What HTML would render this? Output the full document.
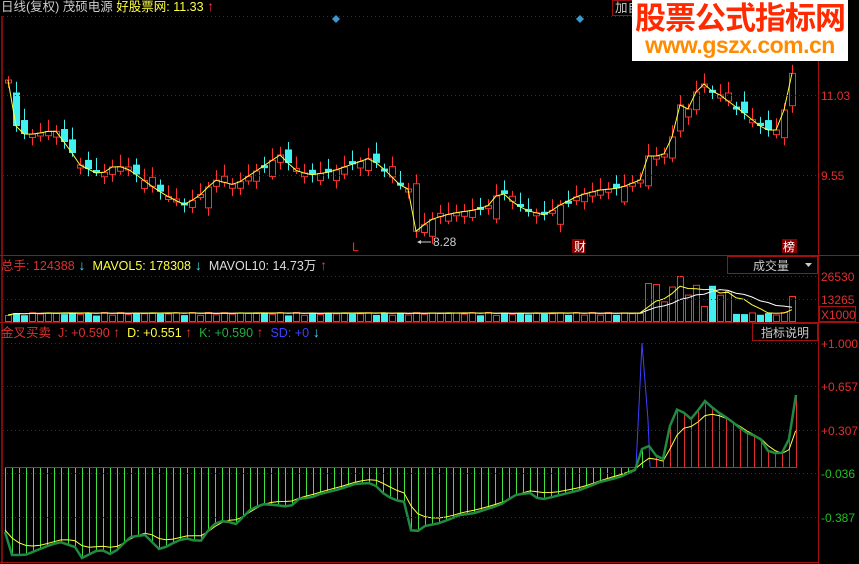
<!DOCTYPE html>
<html><head><meta charset="utf-8"><style>
html,body{margin:0;padding:0;background:#000;width:859px;height:564px;overflow:hidden;font-family:"Liberation Sans","Noto Sans CJK SC",sans-serif;}
#c{position:absolute;left:0;top:0}
.t{position:absolute;font-size:12.5px;white-space:nowrap;line-height:14px}
.ar{font-weight:bold;font-size:14px}
</style></head><body>
<svg id="c" width="859" height="564" xmlns="http://www.w3.org/2000/svg">
<rect width="859" height="564" fill="#000"/>
<g id="g"></g>
<line x1="2" y1="16" x2="2" y2="564" stroke="#a01010" stroke-width="1.5"/>
<line x1="818.5" y1="16" x2="818.5" y2="564" stroke="#a01010"/>
<line x1="0" y1="255.5" x2="859" y2="255.5" stroke="#a01010"/>
<line x1="0" y1="322.5" x2="859" y2="322.5" stroke="#a01010"/>
<line x1="0" y1="562.5" x2="818" y2="562.5" stroke="#a01010"/>
<g stroke="#801010" stroke-dasharray="1,3">
<line x1="3" y1="16.5" x2="818" y2="16.5"/>
<line x1="3" y1="95.5" x2="818" y2="95.5"/>
<line x1="3" y1="175.5" x2="818" y2="175.5"/>
<line x1="3" y1="276.5" x2="818" y2="276.5"/>
<line x1="3" y1="299.5" x2="818" y2="299.5"/>
<line x1="3" y1="343.5" x2="818" y2="343.5"/>
<line x1="3" y1="386.5" x2="818" y2="386.5"/>
<line x1="3" y1="430.5" x2="818" y2="430.5"/>
<line x1="3" y1="473.5" x2="818" y2="473.5"/>
<line x1="3" y1="517.5" x2="818" y2="517.5"/>
</g>
<path d="M336 15 l4 4 -4 4 -4 -4z" fill="#3a9ad0"/>
<path d="M580 15 l4 4 -4 4 -4 -4z" fill="#3a9ad0"/>
<rect x="572" y="239" width="13" height="14" fill="#8a0000"/>
<rect x="782" y="239" width="15" height="14" fill="#8a0000"/>
<text x="574" y="251" fill="#fff" font-size="12" font-family="Noto Sans CJK SC">财</text>
<text x="783" y="251" fill="#fff" font-size="12" font-family="Noto Sans CJK SC">榜</text>
<text x="352" y="251" fill="#ff2020" font-size="12" font-family="Liberation Sans">L</text>
<line x1="420" y1="242" x2="431" y2="242" stroke="#ccc"/><path d="M417 242 l4 -2 v4z" fill="#ccc"/>
<text x="433" y="246" fill="#ccc" font-size="12" font-family="Liberation Sans">8.28</text>
<rect x="727.5" y="256.5" width="90" height="17" fill="none" stroke="#a01010"/>
<text x="753" y="270" fill="#ccc" font-size="12" font-family="Noto Sans CJK SC">成交量</text>
<path d="M805 263 h7 l-3.5 4z" fill="#ccc"/>
<rect x="752.5" y="323.5" width="65" height="17" fill="none" stroke="#a01010"/>
<text x="761" y="337" fill="#ccc" font-size="12" font-family="Noto Sans CJK SC">指标说明</text>
<rect x="819.5" y="306.5" width="36" height="15" fill="none" stroke="#a01010"/>
<g font-family="Liberation Sans" font-size="12" fill="#e03030">
<text x="821" y="100">11.03</text><text x="821" y="180">9.55</text>
<text x="821" y="281">26530</text><text x="821" y="304">13265</text><text x="821" y="319">X1000</text>
<text x="821" y="348">+1.000</text><text x="821" y="391">+0.657</text><text x="821" y="435">+0.307</text>
</g>
<g font-family="Liberation Sans" font-size="12" fill="#20c020">
<text x="821" y="478">-0.036</text><text x="821" y="522">-0.387</text>
</g>
</svg>
<div class="t" style="left:1px;top:-1px;color:#ccc">日线(复权) 茂硕电源 <span style="color:#ffff40">好股票网: 11.33</span> <span class="ar" style="color:#ff3030">↑</span></div>
<div class="t" style="left:612px;top:0;color:#ccc;border:1px solid #a01010;padding:0 2px">加自选</div>
<div style="position:absolute;left:632px;top:0;width:216px;height:61px;background:#fff;overflow:hidden">
<div style="color:#ff2a00;font-size:31px;font-weight:bold;line-height:36px;white-space:nowrap;text-align:center;letter-spacing:-1px;font-family:'Noto Sans CJK SC',sans-serif;margin-top:-2px">股票公式指标网</div>
<div style="color:#ff8c00;font-size:23px;font-weight:bold;line-height:22px;white-space:nowrap;text-align:center;letter-spacing:-0.5px;font-family:'Liberation Sans',sans-serif">www.gszx.com.cn</div></div>
<div class="t" style="left:1px;top:258px;color:#e03030">总手: 124388<span class="ar" style="color:#40e0f0"> ↓</span> <span style="color:#ffff40">&nbsp;MAVOL5: 178308</span><span class="ar" style="color:#40e0f0"> ↓</span> <span style="color:#ddd">&nbsp;MAVOL10: 14.73万</span><span class="ar" style="color:#ff3030"> ↑</span></div>
<div class="t" style="left:1px;top:325px;color:#e03030">金叉买卖 &nbsp;J: +0.590 <span class="ar">↑</span> <span style="color:#ffff40">&nbsp;D: +0.551</span> <span class="ar">↑</span> <span style="color:#20b040">&nbsp;K: +0.590</span> <span class="ar">↑</span> <span style="color:#4040ff">&nbsp;SD: +0</span><span class="ar" style="color:#40e0f0"> ↓</span></div>
<script>
function interp(pts,x){for(let i=1;i<pts.length;i++){if(x<=pts[i][0]){const a=pts[i-1],b=pts[i];return a[1]+(b[1]-a[1])*(x-a[0])/(b[0]-a[0]);}}return pts[pts.length-1][1];}
const P=[[8,80],[15,125],[25,135],[40,133],[55,130],[70,150],[80,165],[100,175],[115,165],[130,170],[150,185],[165,195],[185,205],[200,195],[215,180],[235,185],[250,175],[265,165],[280,155],[295,170],[310,175],[330,172],[350,165],[370,158],[385,170],[400,185],[410,190],[415,232],[430,220],[445,215],[460,212],[475,210],[490,205],[500,190],[510,200],[525,210],[545,215],[560,205],[580,195],[600,190],[620,188],[640,180],[650,150],[660,160],[670,145],[680,105],[690,110],[700,80],[710,90],[720,95],[740,110],[750,118],[765,130],[780,130],[790,80],[796,60]];
const K=[[5,532],[12,555],[25,555],[50,545],[60,542],[75,547],[82,558],[100,549],[112,555],[130,537],[145,535],[160,550],[175,542],[185,538],[200,542],[212,525],[225,520],[235,525],[250,510],[262,504],[275,505],[290,507],[300,498],[310,498],[320,494],[340,489],[355,484],[370,483],[375,485],[385,495],[395,500],[405,502],[412,535],[425,526],[440,523],[460,515],[475,513],[490,508],[500,505],[515,495],[530,493],[540,500],[560,495],[580,490],[600,482],[620,477],[635,470],[645,440],[655,455],[665,460],[672,412],[680,408],[690,420],[700,408],[705,401],[715,410],[730,420],[745,432],[760,438],[770,454],[780,452],[787,455],[792,415],[797,390]];
let s='';let prev=interp(P,8);let pl='';let kl='',dl='';let d=interp(K,5);
const vol=[];
for(let x=8,i=0;x<=797;x+=8,i++){
 const c=interp(P,x);const o=prev+(Math.sin(i*2.3)*6)+(i%4==1?8:0);const up=c<o||i%3==0;
 const top=Math.min(o,c),bot=Math.max(o,c),h=Math.max(bot-top,3);
 const col=up?'#ff3030':'#40f0f0';
 s+=`<line x1="${x+.5}" y1="${top-4-Math.abs(Math.sin(i))*8}" x2="${x+.5}" y2="${bot+3+Math.abs(Math.cos(i))*5}" stroke="${col}"/>`;
 s+=up?`<rect x="${x-2.5}" y="${top}" width="6" height="${h}" fill="#000" stroke="${col}"/>`:`<rect x="${x-3}" y="${top}" width="7" height="${h}" fill="${col}"/>`;
 pl+=(pl?'L':'M')+x+' '+c.toFixed(1);prev=c;
 let vh=6+Math.abs(Math.sin(i*1.7))*3;
 if(x>640&&x<730)vh=15+Math.abs(Math.sin(i*1.3))*22; if(x>=675&&x<=682)vh=45; if(x>=645&&x<=652)vh=38; if(x>785)vh=25;
 vol.push([x,vh]);
 s+=up?`<rect x="${x-2.5}" y="${321.5-vh}" width="6" height="${vh}" fill="none" stroke="#ff3030"/>`:`<rect x="${x-3}" y="${322-vh}" width="7" height="${vh}" fill="#40f0f0"/>`;
}
s+=`<path d="${pl}" fill="none" stroke="#ffff40" stroke-width="1"/>`;
let m5='',m10='';
for(let j=0;j<vol.length;j++){let a=0,n=0,b=0,m=0;for(let k=Math.max(0,j-4);k<=j;k++){a+=vol[k][1];n++;}for(let k=Math.max(0,j-9);k<=j;k++){b+=vol[k][1];m++;}
m5+=(m5?'L':'M')+vol[j][0]+' '+(322-a/n-1).toFixed(1);m10+=(m10?'L':'M')+vol[j][0]+' '+(322-b/m-1).toFixed(1);}
s+=`<path d="${m10}" fill="none" stroke="#fff"/><path d="${m5}" fill="none" stroke="#ffff40"/>`;
for(let x=5;x<=797;x+=7){const k=interp(K,x);
 if(x<645){s+=`<line x1="${x+.5}" y1="468" x2="${x+.5}" y2="${k}" stroke="#40e040"/>`;}
 else if(x>=650){s+=`<line x1="${x+.5}" y1="467" x2="${x+.5}" y2="${k}" stroke="#e03030"/>`;}
 kl+=(kl?'L':'M')+x+' '+k.toFixed(1);d=d*0.6+k*0.4+ (k>467?-2:2);dl+=(dl?'L':'M')+x+' '+d.toFixed(1);}
s+=`<line x1="5" y1="467.5" x2="636" y2="467.5" stroke="#4040ff"/><line x1="650" y1="467.5" x2="797" y2="467.5" stroke="#4040ff"/>`;
s+=`<path d="M636 467 L642 343 L648 420 L650 467" fill="none" stroke="#4040ff"/>`;
s+=`<path d="${dl}" fill="none" stroke="#ffff40"/><path d="${kl}" fill="none" stroke="#208a40" stroke-width="2.5"/>`;
document.getElementById('g').innerHTML=s;
</script>
</body></html>
